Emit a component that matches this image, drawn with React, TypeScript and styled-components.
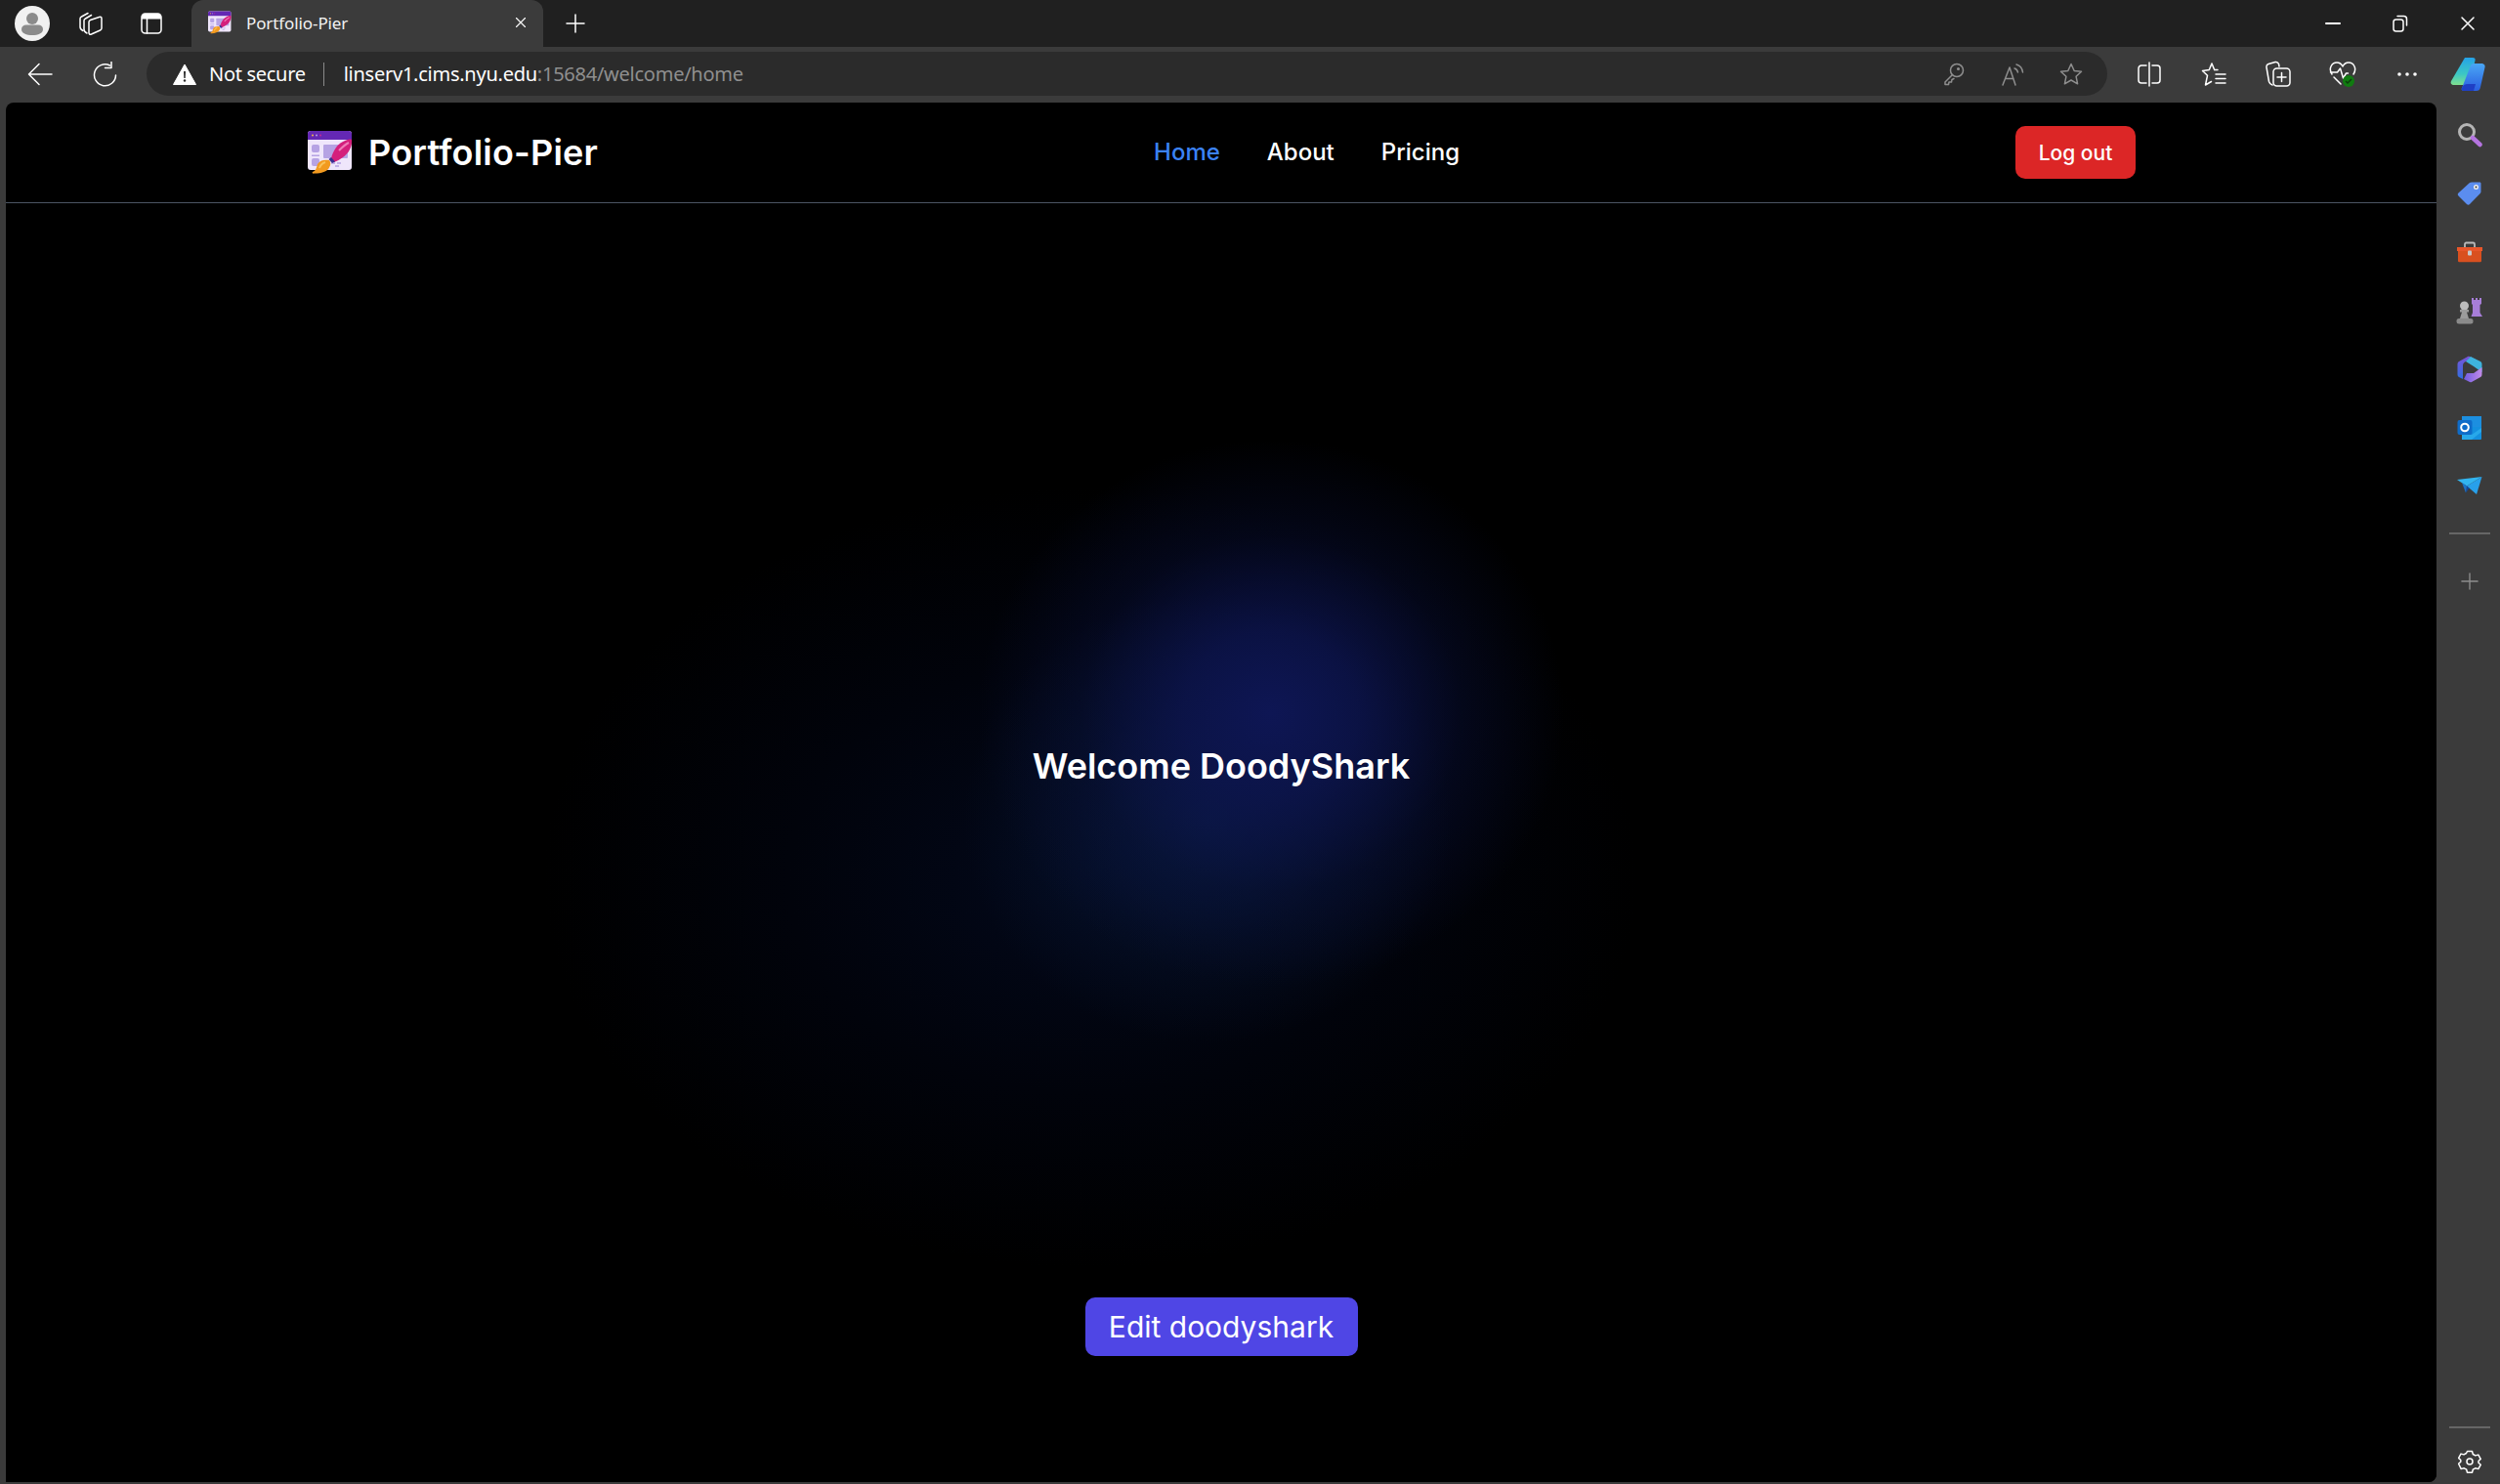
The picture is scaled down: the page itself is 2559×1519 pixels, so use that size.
import React from "react";
import styled, { createGlobalStyle } from "styled-components";

const GlobalStyle = createGlobalStyle`
  html, body {
    margin: 0;
    padding: 0;
    height: 100%;
    background: #3b3b3b;
    overflow: hidden;
  }
  * {
    box-sizing: border-box;
  }
`;

const Browser = styled.div`
  display: flex;
  flex-direction: column;
  height: 100vh;
  font-family: "Noto Sans", "Open Sans", sans-serif;
  color: #fff;
`;

const TabStrip = styled.div`
  display: flex;
  align-items: stretch;
  height: 48px;
  padding-left: 3px;
  background: #202020;
`;

const Slot = styled.div<{ $w: number }>`
  display: flex;
  align-items: center;
  justify-content: center;
  flex: none;
  width: ${(p) => p.$w}px;
`;

const Tab = styled.div`
  display: flex;
  align-items: center;
  flex: none;
  width: 360px;
  margin-left: 9px;
  padding: 0 17px 2px 17px;
  background: #3b3b3b;
  border-radius: 12px 12px 0 0;
`;

const TabTitle = styled.span`
  flex: 1;
  margin-left: 15px;
  font-size: 17px;
  letter-spacing: -0.1px;
  color: #f2f2f2;
`;

const NewTab = styled(Slot)`
  margin-left: 3px;
`;

const WindowControls = styled.div`
  display: flex;
  gap: 3px;
  margin-left: auto;
`;

const Toolbar = styled.div`
  display: flex;
  align-items: center;
  height: 57px;
  padding: 0 4px 2px 8px;
  background: #3b3b3b;
`;

const AddressBar = styled.div`
  display: flex;
  align-items: center;
  flex: 1;
  height: 45px;
  margin: 0 10px;
  padding: 0 7px 0 27px;
  background: #2b2b2b;
  border-radius: 23px;
`;

const SecurityLabel = styled.span`
  margin-left: 13px;
  font-size: 20px;
  letter-spacing: -0.3px;
  color: #fff;
`;

const Separator = styled.span`
  width: 1px;
  height: 24px;
  margin: 0 20px 0 18px;
  background: #8a8a8a;
`;

const Url = styled.span`
  flex: 1;
  font-size: 20px;
  letter-spacing: -0.25px;
  color: #fff;
`;

const UrlRest = styled.span`
  color: #8f8f8f;
`;

const Body = styled.div`
  display: flex;
  flex: 1;
  min-height: 0;
  padding-left: 6px;
`;

const Page = styled.div`
  display: flex;
  flex-direction: column;
  flex: 1;
  min-width: 0;
  margin-bottom: 2px;
  background: #000;
  border-radius: 8px 8px 8px 0;
  overflow: hidden;
  font-family: Inter, "Liberation Sans", sans-serif;
`;

const Header = styled.header`
  display: flex;
  align-items: center;
  justify-content: space-between;
  flex: none;
  height: 103px;
  padding: 0 308px 0 309px;
  border-bottom: 1px solid #4b5563;
`;

const Brand = styled.a`
  display: flex;
  align-items: center;
  gap: 16px;
  font-size: 36px;
  font-weight: 600;
  line-height: 40px;
  letter-spacing: 0.2px;
  color: #fff;
`;

const Nav = styled.nav`
  display: flex;
  gap: 48px;
`;

const NavLink = styled.a<{ $active?: boolean }>`
  font-size: 24px;
  font-weight: 500;
  line-height: 32px;
  color: ${(p) => (p.$active ? "#3b82f6" : "#fff")};
`;

const LogOut = styled.button`
  width: 123px;
  height: 54px;
  border: 0;
  border-radius: 10px;
  background: #dc2626;
  color: #fff;
  font-family: inherit;
  font-size: 21px;
  font-weight: 500;
`;

const Main = styled.main`
  display: flex;
  flex-direction: column;
  align-items: center;
  flex: 1;
  padding-top: 556px;
  background:
    radial-gradient(ellipse 300px 280px at 1295px 522px, #0e1654 0%, rgba(13, 21, 80, 0.8) 30%, rgba(10, 18, 66, 0.35) 65%, transparent 100%),
    radial-gradient(ellipse 250px 230px at 1230px 630px, rgba(10, 30, 70, 0.75) 0%, rgba(8, 24, 56, 0.35) 55%, transparent 100%),
    radial-gradient(ellipse 560px 400px at 1110px 690px, rgba(3, 10, 32, 0.85) 0%, rgba(2, 6, 22, 0.5) 55%, transparent 100%),
    #000;
`;

const Welcome = styled.h1`
  margin: 0;
  font-size: 36px;
  font-weight: 600;
  line-height: 40px;
  color: #fff;
`;

const EditButton = styled.button`
  width: 279px;
  height: 60px;
  margin-top: 524px;
  border: 0;
  border-radius: 10px;
  background: #4f46e5;
  color: #fff;
  font-family: inherit;
  font-size: 30px;
  font-weight: 400;
`;

const Sidebar = styled.aside`
  display: flex;
  flex-direction: column;
  align-items: center;
  flex: none;
  width: 65px;
  padding: 3px 0 0 2px;
  background: #3b3b3b;
`;

const SideSlot = styled.div`
  display: flex;
  align-items: center;
  justify-content: center;
  width: 100%;
  height: 60px;
  flex: none;
`;

const SideRule = styled.div<{ $bottom?: boolean }>`
  width: 42px;
  height: 2px;
  flex: none;
  margin: ${(p) => (p.$bottom ? "auto 0 11px" : "17px 0 18px")};
  background: #666;
`;

const GearSlot = styled(SideSlot)`
  height: 46px;
`;

const Line = {
  fill: "none",
  stroke: "#fff",
  strokeWidth: 1.5,
  strokeLinecap: "round",
  strokeLinejoin: "round",
} as const;

const Dim = { ...Line, stroke: "#8e8e8e" } as const;

const Avatar = () => (
  <svg width="36" height="36" viewBox="0 0 36 36">
    <circle cx="18" cy="18" r="18" fill="#f1f1f1" />
    <circle cx="18" cy="13" r="6" fill="#8b8b8b" />
    <path d="M7 24c0-3 2-4.500 5-4.500h12c3 0 5 1.500 5 4.500 0 4-5 6-11 6S7 28 7 24z" fill="#8b8b8b" />
  </svg>
);

const TabsIcon = () => (
  <svg width="26" height="26" viewBox="0 0 26 26" {...Line}>
    <path d="M5 20.500c-2-1-3-2-3-4V8c0-1 .5-1.500 1.500-2L10 2.500" />
    <path d="M9 23c-2-1-3-2-3-4V10c0-1 .5-1.500 1.500-2l6-3.500" />
    <path d="M11 11.500c0-1 .5-1.500 1.500-2l9-3c1.500-.5 2.500 0 2.500 1.500v10c0 1-.5 1.500-1.500 2l-9 4c-1.500.5-2.500 0-2.500-1.500z" />
  </svg>
);

const VerticalTabsIcon = () => (
  <svg width="22" height="22" viewBox="0 0 22 22" {...Line}>
    <rect x="1" y="1" width="20" height="20" rx="3.500" />
    <path d="M6.500 6.500V21" />
    <path d="M1 4.500A3.500 3.500 0 0 1 4.500 1h13A3.500 3.500 0 0 1 21 4.500V6.500H1z" fill="#fff" stroke="none" />
  </svg>
);

const PortfolioLogo = ({ size }: { size: number }) => (
  <svg width={size} height={size} viewBox="0 0 46 46">
    <rect x="0" y="1" width="45" height="40" rx="3" fill="#efe6fb" />
    <path d="M0 10V4a3 3 0 0 1 3-3h39a3 3 0 0 1 3 3v6z" fill="#6428b4" />
    <circle cx="5" cy="5.500" r="1" fill="#f2b84b" />
    <circle cx="9" cy="5.500" r="1" fill="#b79be8" />
    <circle cx="13" cy="5.500" r="1" fill="#c22b9a" />
    <rect x="4" y="15" width="8" height="8" rx="2" fill="#b6a3e4" />
    <rect x="4" y="29" width="8" height="8" rx="2" fill="#b6a3e4" />
    <rect x="4" y="25.500" width="8" height="1.500" fill="#b6a3e4" />
    <rect x="16" y="15" width="25" height="14" rx="1" fill="#b6a3e4" />
    <path d="M24 34h4M30 34h4M28 37h4" stroke="#b6a3e4" strokeWidth="1.500" />
    <path d="M24 29C26 21 30 15 36 12 40 10 43 9 45 10 46 16 42 24 36 28 33 30 30 32 27 33z" fill="#d41f7c" />
    <path d="M32 21c3-3 6-6 10-8" stroke="#f07cb8" strokeWidth="2" fill="none" />
    <path d="M24 28l-2.500 2 3.500 4 3-1.500z" fill="#3a2f8f" />
    <path d="M22 31c-5-1-10 0-12 4-1 4-2 7-5 8-1 1 0 2 2 1.500 7 0 13-2 15-6 2-3 1.500-5.500 0-7.500z" fill="#f29a1f" />
    <path d="M18 33c-3 1-5 3-6 6" stroke="#f9c25a" strokeWidth="2" fill="none" />
  </svg>
);

const CloseIcon = ({ size }: { size: number }) => (
  <svg width={size} height={size} viewBox="0 0 16 16" {...Line}>
    <path d="M2 2l12 12M14 2L2 14" />
  </svg>
);

const PlusIcon = ({ size, dim }: { size: number; dim?: boolean }) => (
  <svg width={size} height={size} viewBox="0 0 20 20" {...(dim ? Dim : Line)}>
    <path d="M10 1v18M1 10h18" />
  </svg>
);

const MinimizeIcon = () => (
  <svg width="16" height="16" viewBox="0 0 16 16" {...Line}>
    <path d="M1 8h14" strokeWidth="2" />
  </svg>
);

const RestoreIcon = () => (
  <svg width="16" height="18" viewBox="0 0 16 18" {...Line}>
    <rect x="1" y="5" width="10" height="12" rx="2.500" />
    <path d="M5 1.500h6.500a3 3 0 0 1 3 3V11" />
  </svg>
);

const BackIcon = () => (
  <svg width="26" height="24" viewBox="0 0 26 24" {...Line}>
    <path d="M25 12H2M12 1.500L1.500 12 12 22.500" />
  </svg>
);

const RefreshIcon = () => (
  <svg width="26" height="26" viewBox="0 0 26 26" {...Line}>
    <path d="M18.500 4A11 11 0 1 0 24.500 14" />
    <path d="M20 .5V6.500h-6.500" />
  </svg>
);

const WarningIcon = () => (
  <svg width="24" height="22" viewBox="0 0 24 22">
    <path d="M12 1L23.500 21.500H.5z" fill="#fff" stroke="#fff" strokeLinejoin="round" />
    <path d="M11 8h2l-.3 7h-1.400z" fill="#2b2b2b" />
    <circle cx="12" cy="17.500" r="1.200" fill="#2b2b2b" />
  </svg>
);

const KeyIcon = () => (
  <svg width="22" height="24" viewBox="0 0 22 24" {...Dim}>
    <circle cx="14" cy="8" r="6.500" />
    <circle cx="15.500" cy="6.500" r=".8" />
    <path d="M9.500 12.500L2 20v2.500h3.500l.5-2.500h2.500l.5-2.500 2-1" />
  </svg>
);

const ReadAloudIcon = () => (
  <svg width="24" height="24" viewBox="0 0 24 24" {...Dim}>
    <path d="M2 23L9 5l6 18M4.500 16.500h8.500" />
    <path d="M14 6c2 .5 3 2 3.500 4M16 2c3.500 1 6 4 6.500 8" />
  </svg>
);

const StarIcon = () => (
  <svg width="24" height="24" viewBox="0 0 24 24" {...Dim}>
    <path d="M12 1.500l3.200 7 7.300.8-5.400 5 1.500 7.500-6.600-3.800-6.600 3.800 1.500-7.500-5.400-5 7.300-.8z" />
  </svg>
);

const SplitIcon = () => (
  <svg width="24" height="26" viewBox="0 0 24 26" {...Line}>
    <path d="M9 4H4a3 3 0 0 0-3 3v12a3 3 0 0 0 3 3h5M15 4h5a3 3 0 0 1 3 3v12a3 3 0 0 1-3 3h-5M12 1v24" />
  </svg>
);

const FavoritesIcon = () => (
  <svg width="26" height="26" viewBox="0 0 26 26" {...Line}>
    <path d="M11 2l2.700 6.500M11 2L8.300 8.500 1.500 9.500l5 4.800L4.500 24l6-3.500" />
    <path d="M13.700 8.500H17M15 13h10M15 17.500h10M15 22h10" />
  </svg>
);

const CollectionsIcon = () => (
  <svg width="26" height="28" viewBox="0 0 26 28" {...Line}>
    <path d="M7 25c-2-.5-3-2-3.500-3.500L1 7c-.3-2 .5-3 2-3.500L10 1.500c1.500-.3 3 .5 3.500 2L14 6" />
    <rect x="8" y="8" width="17" height="18" rx="3.500" />
    <path d="M16.500 12.500v9M12 17h9" />
  </svg>
);

const HealthIcon = () => (
  <svg width="28" height="28" viewBox="0 0 28 28">
    <path d="M3 14C-1 8 3 2 8 2c3 0 5 2 6 4 1-2 3-4 6-4 5 0 9 6 5 12M1.500 12h7l3-4 3 10 3-5h2M5 17l7 7" {...Line} />
    <circle cx="20" cy="21" r="6" fill="#107c10" />
    <path d="M17 21l2 2 4-4" fill="none" stroke="#0c3d0c" strokeWidth="1.500" />
  </svg>
);

const DotsIcon = () => (
  <svg width="20" height="4" viewBox="0 0 20 4">
    <circle cx="2" cy="2" r="1.800" fill="#fff" />
    <circle cx="10" cy="2" r="1.800" fill="#fff" />
    <circle cx="18" cy="2" r="1.800" fill="#fff" />
  </svg>
);

const CopilotIcon = () => (
  <svg width="36" height="36" viewBox="0 0 36 36">
    <defs>
      <linearGradient id="copA" x1="0" y1="0" x2="0" y2="1">
        <stop offset="0" stopColor="#25a2e8" />
        <stop offset="0.6" stopColor="#3cc7c4" />
        <stop offset="1" stopColor="#7fe08e" />
      </linearGradient>
      <linearGradient id="copB" x1="0" y1="0" x2="0" y2="1">
        <stop offset="0" stopColor="#4aa6f5" />
        <stop offset="1" stopColor="#2a5fe0" />
      </linearGradient>
    </defs>
    <path d="M15 1h8c2 0 3 1 2.500 3L20 26c-.5 2-2 3-4 3H4c-3 0-4-2-3-4z" fill="url(#copA)" />
    <path d="M24 7h8c3 0 4 2 3.500 4L31 31c-.5 3-2 4-4 4H14c-2 0-3-2-2-3l9-23c.5-1 1.500-2 3-2z" fill="url(#copB)" />
    <path d="M12 32c1-3 3-4 6-4h8l-2 7H14c-2 0-3-1-2-3z" fill="#1f3fc4" />
  </svg>
);

const SearchIcon = () => (
  <svg width="26" height="26" viewBox="0 0 26 26">
    <circle cx="10" cy="10" r="7.500" fill="none" stroke="#b4b4b4" strokeWidth="3" />
    <path d="M16 16l7.500 7" stroke="#b574e0" strokeWidth="4.500" strokeLinecap="round" />
  </svg>
);

const TagIcon = () => (
  <svg width="26" height="26" viewBox="0 0 26 26">
    <path d="M15 1.500h8c1 0 1.500.5 1.500 1.500v8c0 1-.3 1.500-1 2.200L13 24c-1 1-2 1-3 0L1.500 15.500c-1-1-1-2 0-3L13 2c.7-.3 1.200-.5 2-.5z" fill="#5b8def" />
    <circle cx="19.500" cy="6.500" r="2.500" fill="#f1f1f1" />
    <circle cx="19.500" cy="6.500" r="1" fill="#3b3b3b" />
  </svg>
);

const ToolboxIcon = () => (
  <svg width="28" height="22" viewBox="0 0 28 22">
    <path d="M9 6V3c0-1 .5-1.500 1.500-1.500h7C18.500 1.500 19 2 19 3v3" fill="none" stroke="#b9b9b9" strokeWidth="1.800" />
    <path d="M1 6h26v4H1z" fill="#e8562a" />
    <path d="M2 10h24v10c0 .7-.5 1.200-1 1.200H3c-.5 0-1-.5-1-1.200z" fill="#d9501f" />
    <rect x="12" y="9.500" width="4" height="5" rx="1" fill="#c9c9c9" />
  </svg>
);

const ChessIcon = () => (
  <svg width="28" height="28" viewBox="0 0 28 28">
    <path d="M16 1h2v2h2V1h2v2h2V1h2v6l-1.500 1v8L27 20H15.500l1.500-4V8l-1-1z" fill="#a77ed8" />
    <circle cx="8.500" cy="9" r="4.500" fill="#bdbdbd" />
    <path d="M4 13h9v2.500h-2L13 22H4l2-6.500H4z" fill="#9b9b9b" />
    <rect x="0.500" y="22" width="17" height="5.500" rx="2.500" fill="#8a8a8a" />
  </svg>
);

const M365Icon = () => (
  <svg width="26" height="28" viewBox="0 0 26 28">
    <defs>
      <linearGradient id="msA" x1="0" y1="0" x2="0" y2="1">
        <stop offset="0" stopColor="#7a54d8" />
        <stop offset="1" stopColor="#2f6fe0" />
      </linearGradient>
      <linearGradient id="msB" x1="0" y1="0" x2="1" y2="0">
        <stop offset="0" stopColor="#6f5be0" />
        <stop offset="1" stopColor="#c28be8" />
      </linearGradient>
    </defs>
    <path d="M11 1L2 6c-1 .5-1.500 1.500-1.500 3v10c0 1.500.5 2.500 1.500 3l4 2V10c0-2 1-3 3-4l10-2-6-3c-1-.3-1.500-.3-2 0z" fill="url(#msA)" />
    <path d="M14 1l10 5c1 .5 1.500 1.500 1.500 3v8L17 11l-8-5z" fill="#3eb3dc" />
    <path d="M7 24l6 3c1 .3 1.500.3 2 0l9-5c1-.5 1.500-1.500 1.500-3V12L17 18H10z" fill="url(#msB)" />
  </svg>
);

const OutlookIcon = () => (
  <svg width="26" height="26" viewBox="0 0 26 26">
    <rect x="5" y="1" width="20" height="12" fill="#1c8fe0" />
    <path d="M5 12h20v12a1 1 0 0 1-1 1H6a1 1 0 0 1-1-1z" fill="#1490df" />
    <path d="M5 13l10 7 10-7v4l-10 8H5z" fill="#28a8ea" />
    <rect x="0.500" y="5" width="15" height="15" rx="2" fill="#0f6cc9" />
    <circle cx="8" cy="12.500" r="3.800" fill="none" stroke="#fff" strokeWidth="2" />
  </svg>
);

const SendIcon = () => (
  <svg width="26" height="20" viewBox="0 0 26 20">
    <path d="M0 3l25.500-3L10 9.500z" fill="#32b5f0" />
    <path d="M25.500 0L10 9.500 20 18z" fill="#28a0ea" />
    <path d="M10 9.500l-1 7 3.500-5z" fill="#13489e" />
    <path d="M5 6l4 10.500 1-7z" fill="#1c74c8" />
  </svg>
);

const GearIcon = () => (
  <svg width="24" height="26" viewBox="0 0 24 24" {...Line}>
    <circle cx="12" cy="12" r="3" />
    <path d="M9.500 1.500h5l.8 3 2.500 1.400 3-.8 2.400 4.300-2.200 2.100v1.700l2.200 2.100-2.400 4.300-3-.8-2.500 1.400-.8 3h-5l-.8-3-2.500-1.400-3 .8L.6 14.300l2.200-2.100v-1.700L.6 8.400 3 4.100l3 .8 2.500-1.400z" />
  </svg>
);

const App: React.FC = () => {
  return (
    <Browser>
      <GlobalStyle />
      <TabStrip>
        <Slot $w={60}><Avatar /></Slot>
        <Slot $w={60}><TabsIcon /></Slot>
        <Slot $w={64}><VerticalTabsIcon /></Slot>
        <Tab>
          <PortfolioLogo size={24} />
          <TabTitle>Portfolio-Pier</TabTitle>
          <CloseIcon size={12} />
        </Tab>
        <NewTab $w={60}><PlusIcon size={20} /></NewTab>
        <WindowControls>
          <Slot $w={66}><MinimizeIcon /></Slot>
          <Slot $w={66}><RestoreIcon /></Slot>
          <Slot $w={66}><CloseIcon size={16} /></Slot>
        </WindowControls>
      </TabStrip>
      <Toolbar>
        <Slot $w={66}><BackIcon /></Slot>
        <Slot $w={66}><RefreshIcon /></Slot>
        <AddressBar>
          <WarningIcon />
          <SecurityLabel>Not secure</SecurityLabel>
          <Separator />
          <Url>
            linserv1.cims.nyu.edu<UrlRest>:15684/welcome/home</UrlRest>
          </Url>
          <Slot $w={60}><KeyIcon /></Slot>
          <Slot $w={60}><ReadAloudIcon /></Slot>
          <Slot $w={60}><StarIcon /></Slot>
        </AddressBar>
        <Slot $w={66}><SplitIcon /></Slot>
        <Slot $w={66}><FavoritesIcon /></Slot>
        <Slot $w={66}><CollectionsIcon /></Slot>
        <Slot $w={66}><HealthIcon /></Slot>
        <Slot $w={66}><DotsIcon /></Slot>
        <Slot $w={58}><CopilotIcon /></Slot>
      </Toolbar>
      <Body>
        <Page>
          <Header>
            <Brand>
              <PortfolioLogo size={46} />
              Portfolio-Pier
            </Brand>
            <Nav>
              <NavLink $active>Home</NavLink>
              <NavLink>About</NavLink>
              <NavLink>Pricing</NavLink>
            </Nav>
            <LogOut>Log out</LogOut>
          </Header>
          <Main>
            <Welcome>Welcome DoodyShark</Welcome>
            <EditButton>Edit doodyshark</EditButton>
          </Main>
        </Page>
        <Sidebar>
          <SideSlot><SearchIcon /></SideSlot>
          <SideSlot><TagIcon /></SideSlot>
          <SideSlot><ToolboxIcon /></SideSlot>
          <SideSlot><ChessIcon /></SideSlot>
          <SideSlot><M365Icon /></SideSlot>
          <SideSlot><OutlookIcon /></SideSlot>
          <SideSlot><SendIcon /></SideSlot>
          <SideRule />
          <SideSlot><PlusIcon size={18} dim /></SideSlot>
          <SideRule $bottom />
          <GearSlot><GearIcon /></GearSlot>
        </Sidebar>
      </Body>
    </Browser>
  );
};

export default App;
